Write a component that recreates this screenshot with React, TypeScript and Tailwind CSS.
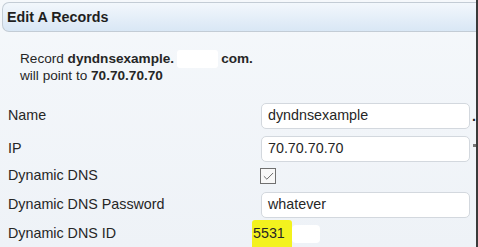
import { Check } from 'lucide-react';

const labelCls = 'w-[261px] shrink-0 pl-2 text-[14.3px] text-[#262626]';
const inputCls =
  'w-[209px] h-[26px] rounded-[5px] border border-[#d3d8de] bg-white pl-[6px] flex items-center text-[14.3px] text-[#262626]';

export default function App() {
  return (
    <div className="w-[478px] h-[247px] flex bg-white overflow-hidden font-['Liberation_Sans',Arial,sans-serif]">
      <div className="flex-1 flex flex-col bg-gradient-to-b from-[#f5f8fb] to-[#eef2f7]">
        {/* Header */}
        <div className="mt-[2px] ml-[2px] h-[31px] rounded-l-[7px] border border-r-0 border-[#c3ccd5] bg-gradient-to-b from-[#f2f7fc] to-[#d9e7f5] flex items-center pl-[4px] pt-[2px]">
          <span className="text-[14.3px] font-bold text-[#1f1f1f]">Edit A Records</span>
        </div>

        {/* Summary */}
        <div className="mt-[18px] pl-5 text-[13.6px] leading-[16px] text-[#262626]">
          <div className="flex items-center">
            <span>Record&nbsp;</span>
            <span className="font-bold">dyndnsexample.</span>
            <span className="w-[41px] h-[18px] bg-white rounded-[3px] mx-[3px]" />
            <span className="font-bold">com.</span>
          </div>
          <div>
            will point to <span className="font-bold">70.70.70.70</span>
          </div>
        </div>

        {/* Form */}
        <div className="mt-[19px] flex flex-col">
          <div className="flex items-center h-[26px]">
            <span className={labelCls}>Name</span>
            <div className={inputCls}>dyndnsexample</div>
            <span className="ml-[2px] w-[4px] overflow-hidden text-[14.3px] font-bold leading-none text-[#262626]">.</span>
          </div>
          <div className="flex items-center h-[26px] mt-[7px]">
            <span className={labelCls}>IP</span>
            <div className={inputCls}>70.70.70.70</div>
            <span className="ml-[3px] w-[3px] h-[3px] bg-[#777] mb-[8px]" />
          </div>
          <div className="flex items-center h-[24px] mt-[2px]">
            <span className={labelCls}>Dynamic DNS</span>
            <div className="ml-[-1px] w-[16px] h-[16px] border border-[#707070] bg-[#f8f8f8] flex items-center justify-center">
              <Check className="w-[13px] h-[13px] text-[#555]" strokeWidth={1.6} />
            </div>
          </div>
          <div className="flex items-center h-[26px] mt-[4px]">
            <span className={labelCls}>Dynamic DNS Password</span>
            <div className={inputCls}>whatever</div>
          </div>
          <div className="flex items-stretch h-[27px] mt-[2px]">
            <span className={labelCls + ' flex items-center'}>Dynamic DNS ID</span>
            <div className="ml-[-9px] w-[40px] bg-[#f3f21e] rounded-t-[3px] flex items-center pl-[1px] text-[14.3px] text-[#262626]">
              5531
            </div>
            <span className="self-center w-[28px] h-[18px] bg-white rounded-[4px]" />
          </div>
        </div>
      </div>
      <div className="w-[2px] bg-[#3a3a3a]" />
    </div>
  );
}
